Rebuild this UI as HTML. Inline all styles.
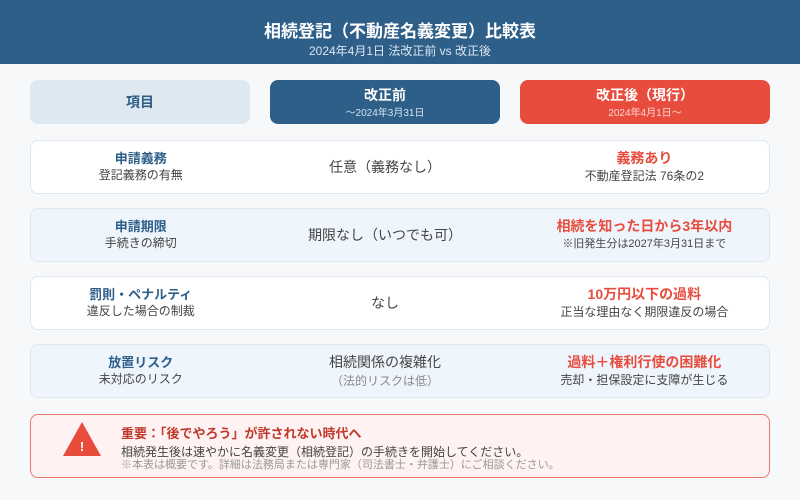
<!DOCTYPE html>
<html><head><meta charset="utf-8"><style>
*{margin:0;padding:0;box-sizing:border-box}
body{width:800px;height:500px;background:#f6f8fa;font-family:"Liberation Sans","Noto Sans CJK JP",sans-serif;position:relative;overflow:hidden}
.hd{position:absolute;left:0;top:0;width:800px;height:64px;background:#2d5f89;color:#fff;text-align:center}
.hd h1{font-size:17px;font-weight:bold;padding-top:21px;line-height:22px}
.hd p{font-size:12px;color:#dce6f0;line-height:16px}
.c{position:absolute;border-radius:8px;text-align:center;display:flex;flex-direction:column;justify-content:center}
.row{position:absolute;left:30px;width:740px;height:54px;border-radius:8px;border:1px solid #dfe6ee;display:flex;align-items:center}
.row>div{text-align:center}
.a{width:220px}.b{width:270px}.d{width:250px}
.t1{font-size:13px;font-weight:bold;color:#2d5f89;line-height:17px}
.s{font-size:12px;color:#444;line-height:17px}
.m{font-size:14px;color:#444}
.r{font-size:14px;font-weight:bold;color:#e84c3d;line-height:19px}
.g{font-size:12px;color:#888}
</style></head><body>
<div class="hd"><h1>相続登記（不動産名義変更）比較表</h1><p>2024年4月1日 法改正前 vs 改正後</p></div>
<div class="c" style="left:30px;top:80px;width:220px;height:44px;background:#dde8f1;color:#2d5f89;font-weight:bold;font-size:14px">項目</div>
<div class="c" style="left:270px;top:80px;width:230px;height:44px;background:#2d5f89;color:#fff"><div style="font-size:14px;font-weight:bold;line-height:18px">改正前</div><div style="font-size:10px;color:#d6e2ee">〜2024年3月31日</div></div>
<div class="c" style="left:520px;top:80px;width:250px;height:44px;background:#e84c3d;color:#fff"><div style="font-size:14px;font-weight:bold;line-height:18px">改正後（現行）</div><div style="font-size:10px;color:#fbd6d1">2024年4月1日〜</div></div>

<div class="row" style="top:140px;background:#fff"><div class="a"><div class="t1">申請義務</div><div class="s">登記義務の有無</div></div><div class="b m">任意（義務なし）</div><div class="d"><div class="r">義務あり</div><div class="s">不動産登記法 76条の2</div></div></div>
<div class="row" style="top:208px;background:#eff5fc"><div class="a"><div class="t1">申請期限</div><div class="s">手続きの締切</div></div><div class="b m">期限なし（いつでも可）</div><div class="d"><div class="r">相続を知った日から3年以内</div><div class="s" style="font-size:11px">※旧発生分は2027年3月31日まで</div></div></div>
<div class="row" style="top:276px;background:#fff"><div class="a"><div class="t1">罰則・ペナルティ</div><div class="s">違反した場合の制裁</div></div><div class="b m">なし</div><div class="d"><div class="r">10万円以下の過料</div><div class="s">正当な理由なく期限違反の場合</div></div></div>
<div class="row" style="top:344px;background:#eff5fc"><div class="a"><div class="t1">放置リスク</div><div class="s">未対応のリスク</div></div><div class="b"><div class="m" style="line-height:19px">相続関係の複雑化</div><div class="g">（法的リスクは低）</div></div><div class="d"><div class="r">過料＋権利行使の困難化</div><div class="s">売却・担保設定に支障が生じる</div></div></div>

<div style="position:absolute;left:30px;top:414px;width:740px;height:64px;border:1.5px solid #e8776c;border-radius:8px;background:#fff2f2">
<svg style="position:absolute;left:31px;top:5px" width="40" height="36" viewBox="0 0 40 36"><polygon points="20,2 39,36 1,36" fill="#e84c3d"/><text x="20" y="31" font-size="13" font-weight="bold" fill="#fff" text-anchor="middle" font-family="Liberation Sans">!</text></svg>
<div style="position:absolute;left:90px;top:8px;font-size:13px;font-weight:bold;color:#c0392b">重要：「後でやろう」が許されない時代へ</div>
<div style="position:absolute;left:90px;top:31px;font-size:12px;color:#444;line-height:13px">相続発生後は速やかに名義変更（相続登記）の手続きを開始してください。</div>
<div style="position:absolute;left:90px;top:44px;font-size:11px;color:#999;line-height:12px">※本表は概要です。詳細は法務局または専門家（司法書士・弁護士）にご相談ください。</div>
</div>
</body></html>
